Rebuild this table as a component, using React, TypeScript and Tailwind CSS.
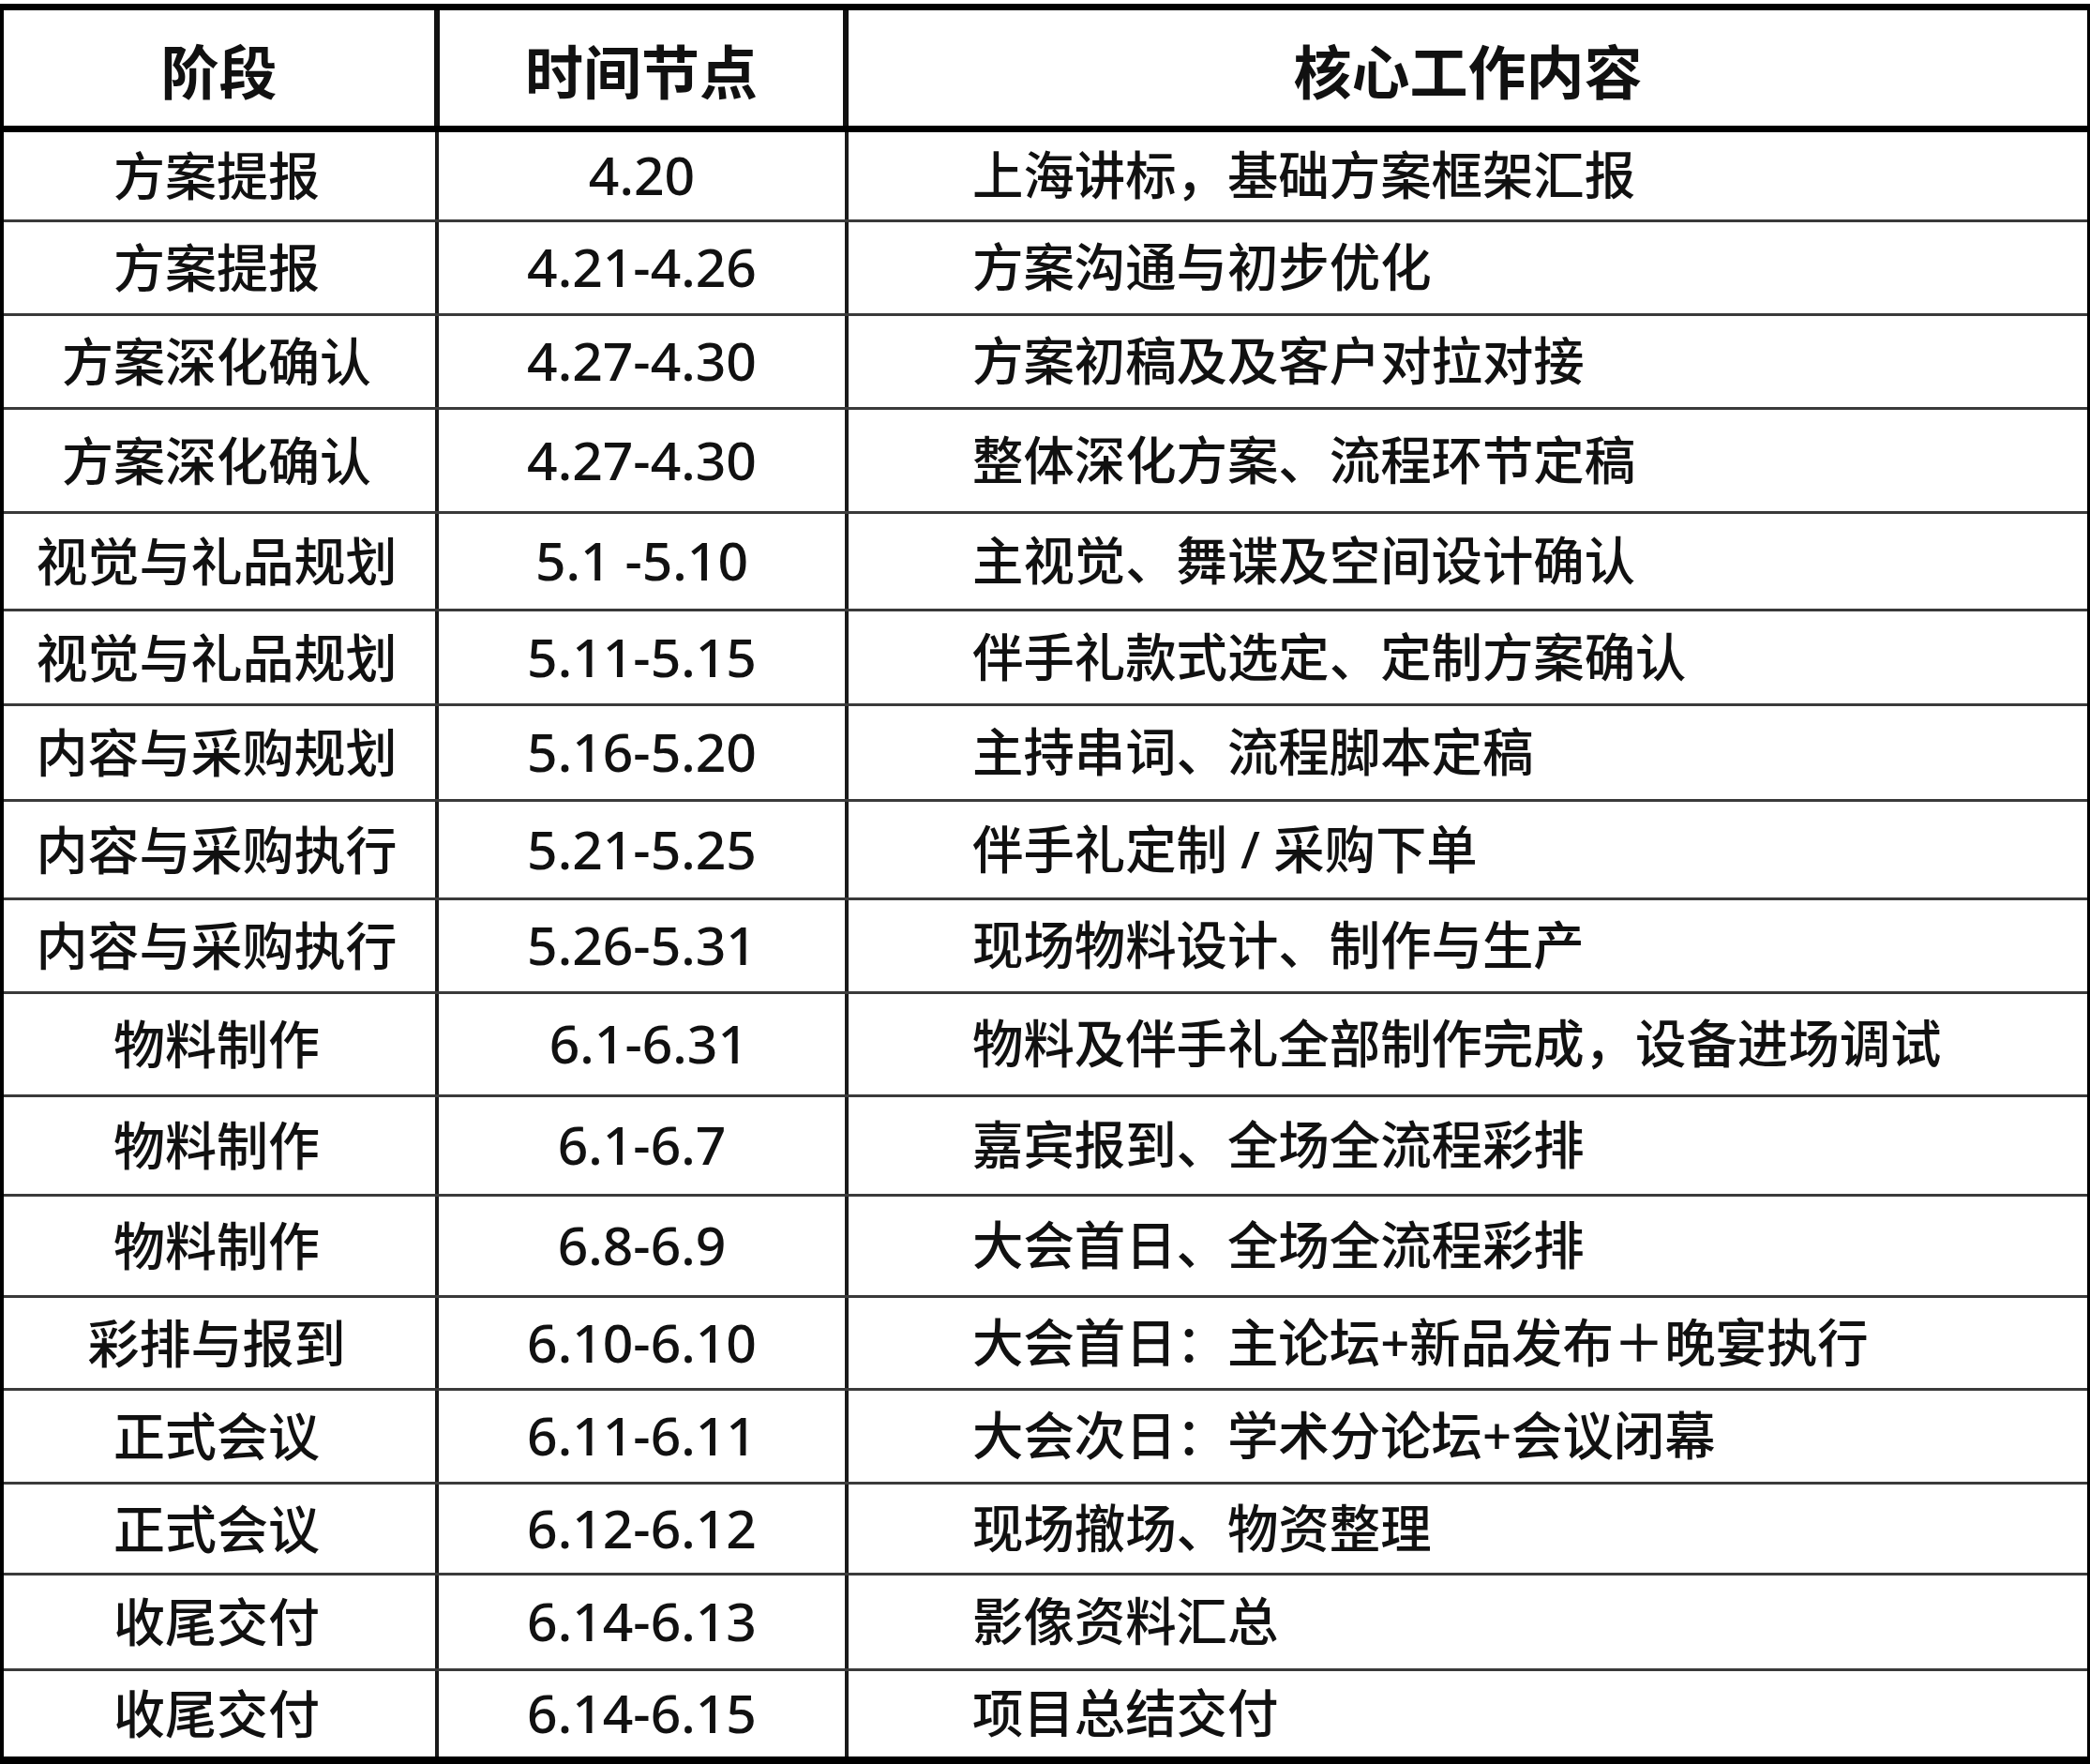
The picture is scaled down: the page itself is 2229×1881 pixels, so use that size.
import React from "react";

type Row = { stage: string; time: string; content: string; h: string };

const rows: Row[] = [
  { stage: "方案提报", time: "4.20", content: "上海讲标，基础方案框架汇报", h: "h-[96px]" },
  { stage: "方案提报", time: "4.21-4.26", content: "方案沟通与初步优化", h: "h-[100px]" },
  { stage: "方案深化确认", time: "4.27-4.30", content: "方案初稿及及客户对拉对接", h: "h-[100px]" },
  { stage: "方案深化确认", time: "4.27-4.30", content: "整体深化方案、流程环节定稿", h: "h-[111px]" },
  { stage: "视觉与礼品规划", time: "5.1 -5.10", content: "主视觉、舞谍及空间设计确认", h: "h-[104px]" },
  { stage: "视觉与礼品规划", time: "5.11-5.15", content: "伴手礼款式选定、定制方案确认", h: "h-[101px]" },
  { stage: "内容与采购规划", time: "5.16-5.20", content: "主持串词、流程脚本定稿", h: "h-[102px]" },
  { stage: "内容与采购执行", time: "5.21-5.25", content: "伴手礼定制 / 采购下单", h: "h-[105px]" },
  { stage: "内容与采购执行", time: "5.26-5.31", content: "现场物料设计、制作与生产", h: "h-[100px]" },
  { stage: "物料制作", time: " 6.1-6.31", content: "物料及伴手礼全部制作完成，设备进场调试", h: "h-[110px]" },
  { stage: "物料制作", time: "6.1-6.7", content: "嘉宾报到、全场全流程彩排", h: "h-[106px]" },
  { stage: "物料制作", time: "6.8-6.9", content: "大会首日、全场全流程彩排", h: "h-[108px]" },
  { stage: "彩排与报到", time: "6.10-6.10", content: "大会首日：主论坛+新品发布＋晚宴执行", h: "h-[99px]" },
  { stage: "正式会议", time: "6.11-6.11", content: "大会次日：学术分论坛+会议闭幕", h: "h-[100px]" },
  { stage: "正式会议", time: "6.12-6.12", content: "现场撤场、物资整理", h: "h-[97px]" },
  { stage: "收尾交付", time: "6.14-6.13", content: "影像资料汇总", h: "h-[102px]" },
  { stage: "收尾交付", time: "6.14-6.15", content: "项目总结交付", h: "h-[91px]" },
];

export default function App() {
  return (
    <div className="w-[2229px] h-[1881px] bg-white pt-[4px] font-['Noto_Sans','Noto_Sans_CJK_SC',sans-serif] text-[#111]">
      <div className="flex flex-col border-l-[4px] border-r-[3px] border-t-[7px] border-b-[8px] border-black">
        <div className="flex h-[130px] border-b-[7px] border-black text-[62px] font-bold leading-none">
          <div className="w-[465px] border-r-[6px] border-[#111] flex items-center justify-center pt-[8px]">
            阶段
          </div>
          <div className="w-[436px] border-r-[6px] border-[#111] flex items-center justify-center pt-[8px]">
            时间节点
          </div>
          <div className="flex-1 flex items-center justify-center pt-[8px]">核心工作内容</div>
        </div>
        {rows.map((r, i) => (
          <div
            key={i}
            className={`flex ${r.h} ${i < rows.length - 1 ? "border-b-[3px] border-[#3a3a3a]" : ""} text-[55px] font-medium leading-none`}
          >
            <div className="w-[464px] border-r-[4px] border-[#1a1a1a] flex items-center justify-center pr-[6px] pb-[2px]">
              {r.stage}
            </div>
            <div className="w-[437px] border-r-[4px] border-[#1a1a1a] flex items-center justify-center whitespace-pre text-[57px] pb-[2px]">
              {r.time}
            </div>
            <div className="flex-1 flex items-center pl-[132px] pb-[2px] text-[54.4px]">{r.content}</div>
          </div>
        ))}
      </div>
    </div>
  );
}
